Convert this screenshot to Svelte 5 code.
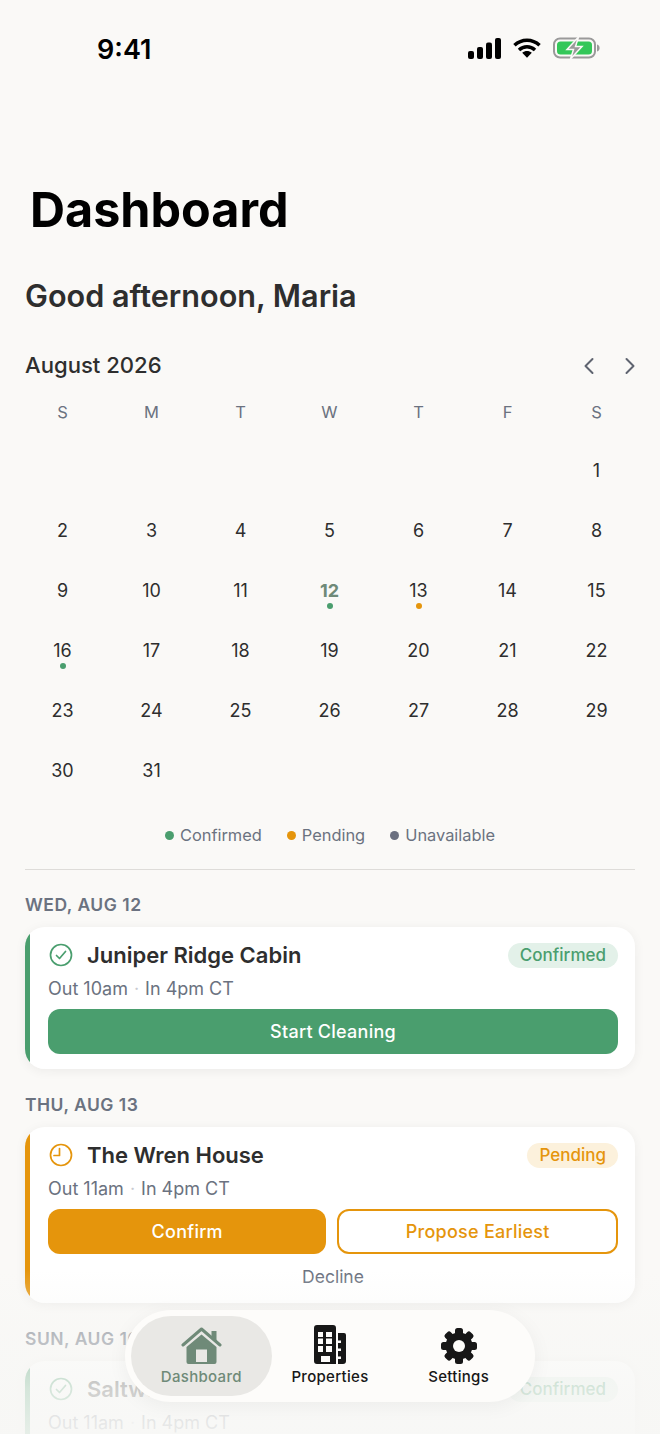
<script lang="ts">
  const weekdays = ["S", "M", "T", "W", "T", "F", "S"];
  const blanks = Array(6).fill(0);
  const days = Array.from({ length: 31 }, (_, i) => i + 1);

  const dots: Record<number, string> = { 12: "green", 13: "amber", 16: "green" };
  const legend = [
    { label: "Confirmed", color: "green" },
    { label: "Pending", color: "amber" },
    { label: "Unavailable", color: "slate" }
  ];
  const gearTeeth = [0, 45, 90, 135];
</script>

<div class="page">
  <header class="status">
    <span class="time">9:41</span>
    <div class="status-icons">
      <svg width="33" height="21" viewBox="0 0 33 21" fill="#000">
        <rect x="0" y="13" width="6" height="8" rx="2" />
        <rect x="9" y="9" width="6" height="12" rx="2" />
        <rect x="18" y="4.500" width="6" height="16.500" rx="2" />
        <rect x="27" y="0" width="6" height="21" rx="2" />
      </svg>
      <svg width="28" height="20" viewBox="0 0 29 20" fill="none" stroke="#000" stroke-width="3.600">
        <path d="M1.500 7.200C9 .2 20 .2 27.500 7.200" />
        <path d="M6.200 12C11 7.600 18 7.600 22.800 12" />
        <path d="M14.500 20l-5-5c3-2.400 7-2.400 10 0z" fill="#000" stroke="none" />
      </svg>
      <svg width="47" height="22" viewBox="0 0 47 22">
        <rect x="1" y="1.500" width="41" height="19" rx="6" fill="none" stroke="#9a9a9a" stroke-width="2" />
        <rect x="4" y="4.500" width="35" height="13" rx="3.500" fill="#34c759" />
        <path d="M44 7.500c2 .6 2.600 2 2.600 3.500s-.6 2.900-2.600 3.500z" fill="#9a9a9a" />
        <path d="M25.500 0 14 12.500h6.500L17.500 22 29 9.500h-6.500z" fill="#9a9a9a" stroke="#faf9f7" stroke-width="1.500" />
      </svg>
    </div>
  </header>

  <h1>Dashboard</h1>
  <h2>Good afternoon, Maria</h2>

  <section class="calendar">
    <div class="month-row">
      <span class="month">August 2026</span>
      <div class="arrows">
        <svg width="12" height="18" viewBox="0 0 12 18" fill="none" stroke="#5f6470" stroke-width="2" stroke-linecap="round" stroke-linejoin="round"><path d="M9.500 2 2.500 9l7 7" /></svg>
        <svg width="12" height="18" viewBox="0 0 12 18" fill="none" stroke="#5f6470" stroke-width="2" stroke-linecap="round" stroke-linejoin="round"><path d="M2.500 2l7 7-7 7" /></svg>
      </div>
    </div>

    <div class="weekdays">
      {#each weekdays as d}
        <span>{d}</span>
      {/each}
    </div>

    <div class="grid">
      {#each blanks as _}
        <span class="cell"></span>
      {/each}
      {#each days as day}
        <span class="cell" class:today={day === 12}>
          {day}
          {#if dots[day]}
            <i class="dot {dots[day]}"></i>
          {/if}
        </span>
      {/each}
    </div>

    <div class="legend">
      {#each legend as item}
        <span class="legend-item"><i class="legend-dot {item.color}"></i>{item.label}</span>
      {/each}
    </div>
  </section>

  <div class="divider"></div>

  <p class="date">WED, AUG 12</p>
  <article class="card card-green">
    <div class="card-top">
      <svg class="status-icon" width="24" height="24" viewBox="0 0 24 24" fill="none" stroke="#4a9e6e" stroke-width="1.700" stroke-linecap="round" stroke-linejoin="round">
        <circle cx="12" cy="12" r="10.500" /><path d="m7.500 12.500 3 3 6-7" />
      </svg>
      <span class="name">Juniper Ridge Cabin</span>
      <span class="badge badge-green">Confirmed</span>
    </div>
    <p class="times">Out 10am<b>·</b>In 4pm CT</p>
    <button class="btn btn-green">Start Cleaning</button>
  </article>

  <p class="date">THU, AUG 13</p>
  <article class="card card-amber">
    <div class="card-top">
      <svg class="status-icon" width="24" height="24" viewBox="0 0 24 24" fill="none" stroke="#e5950c" stroke-width="1.700" stroke-linecap="round" stroke-linejoin="round">
        <circle cx="12" cy="12" r="10.500" /><path d="M10.500 5.500v7H5" />
      </svg>
      <span class="name">The Wren House</span>
      <span class="badge badge-amber">Pending</span>
    </div>
    <p class="times">Out 11am<b>·</b>In 4pm CT</p>
    <div class="actions">
      <button class="btn btn-amber">Confirm</button>
      <button class="btn btn-outline">Propose Earliest</button>
    </div>
    <p class="decline">Decline</p>
  </article>

  <p class="date">SUN, AUG 16</p>
  <article class="card card-green">
    <div class="card-top">
      <svg class="status-icon" width="24" height="24" viewBox="0 0 24 24" fill="none" stroke="#4a9e6e" stroke-width="1.700" stroke-linecap="round" stroke-linejoin="round">
        <circle cx="12" cy="12" r="10.500" /><path d="m7.500 12.500 3 3 6-7" />
      </svg>
      <span class="name">Saltwater Cottage</span>
      <span class="badge badge-green">Confirmed</span>
    </div>
    <p class="times">Out 11am<b>·</b>In 4pm CT</p>
  </article>

  <div class="fade"></div>

  <nav class="tabbar">
    <div class="tab active">
      <svg width="41" height="37" viewBox="0 0 41 37" fill="currentColor">
        <path d="M20.500 7.500 35.500 20v15a2 2 0 0 1-2 2h-26a2 2 0 0 1-2-2V20zM15 22.500V35h11V22.500z" fill-rule="evenodd" />
        <path d="M2 18 20.500 2 39 18" fill="none" stroke="currentColor" stroke-width="3" stroke-linecap="round" stroke-linejoin="round" />
        <path d="M30.500 4h5v11l-5-4.500z" />
      </svg>
      <span>Dashboard</span>
    </div>
    <div class="tab">
      <svg width="34" height="39" viewBox="0 0 34 39" fill="#171717">
        <path fill-rule="evenodd" d="M4 0h16a3 3 0 0 1 3 3v36H4a3 3 0 0 1-3-3V3a3 3 0 0 1 3-3zM5 7v5h5V7zm8 0v5h6V7zM5 13.500V19h5v-5.500zm8 0V19h6v-5.500zM5 21v6h5v-6zm8 0v6h6v-6zM8 31v6h9v-6z" />
        <path d="M25 8h6a2 2 0 0 1 2 2v26a3 3 0 0 1-3 3h-5v-5h3v-2.500h-3V26h3v-2.500h-3V18h3v-2.500h-3z" />
      </svg>
      <span>Properties</span>
    </div>
    <div class="tab">
      <svg width="36" height="36" viewBox="0 0 36 36">
        <circle cx="18" cy="18" r="13.500" fill="#171717" />
        {#each gearTeeth as angle}
          <rect x="14" y="0" width="8" height="36" rx="2.500" fill="#171717" transform="rotate({angle} 18 18)" />
        {/each}
        <circle cx="18" cy="18" r="6" fill="#fdfcfa" />
      </svg>
      <span>Settings</span>
    </div>
  </nav>
</div>

<style>
  :global(body) {
    margin: 0;
    background: #faf9f7;
  }

  .page {
    position: relative;
    width: 660px;
    height: 1434px;
    overflow: hidden;
    padding: 0 25px;
    box-sizing: border-box;
    background: #faf9f7;
    font-family: Inter, "Liberation Sans", sans-serif;
    color: #2e2e2e;
  }

  .status {
    display: flex;
    justify-content: space-between;
    align-items: center;
    height: 96px;
    padding: 0 35px 0 72px;
  }

  .time {
    padding-top: 3px;
    font-size: 27px;
    font-weight: 600;
    color: #000;
  }

  .status-icons {
    display: flex;
    align-items: center;
    gap: 12px;
  }

  h1 {
    margin: 0;
    padding: 84px 0 0 5px;
    font-size: 48.500px;
    line-height: 59px;
    font-weight: 700;
    color: #000;
  }

  h2 {
    margin: 37px 0 0;
    font-size: 30.600px;
    line-height: 40px;
    font-weight: 600;
  }

  .calendar {
    margin-top: 34px;
  }

  .month-row {
    display: flex;
    justify-content: space-between;
    align-items: center;
    height: 30px;
  }

  .month {
    margin-bottom: 1px;
    font-size: 22.100px;
    font-weight: 550;
  }

  .arrows {
    display: flex;
    gap: 29px;
    padding-top: 2px;
    margin-right: -1px;
  }

  .weekdays,
  .grid {
    display: grid;
    grid-template-columns: repeat(7, 89px);
    margin-left: -7px;
    text-align: center;
  }

  .weekdays {
    margin-top: 22px;
    font-size: 16.500px;
    line-height: 20px;
    color: #6b7280;
  }

  .grid {
    margin-top: 19px;
    grid-auto-rows: 60px;
    font-size: 18px;
  }

  .cell {
    position: relative;
    display: block;
    line-height: 60px;
  }

  .today {
    font-weight: 700;
    color: #6f8a78;
  }

  .dot {
    position: absolute;
    left: 50%;
    top: 42px;
    width: 6px;
    height: 6px;
    margin-left: -3px;
    border-radius: 50%;
  }

  .green {
    background: #4a9e6e;
  }

  .amber {
    background: #e5950c;
  }

  .slate {
    background: #6b7080;
  }

  .legend {
    display: flex;
    justify-content: center;
    gap: 25px;
    margin-top: 23px;
    font-size: 16.400px;
    line-height: 22px;
    color: #6b7280;
  }

  .legend-item {
    display: flex;
    align-items: center;
    gap: 6px;
  }

  .legend-dot {
    width: 9px;
    height: 9px;
    border-radius: 50%;
  }

  .divider {
    height: 1px;
    margin-top: 23px;
    background: #dedcd9;
  }

  .date {
    margin: 25px 0 11px;
    font-size: 17.500px;
    line-height: 22px;
    font-weight: 600;
    letter-spacing: 0.5px;
    color: #6b7280;
  }

  .divider + .date {
    margin-top: 24px;
  }

  .card {
    border-radius: 20px;
    padding: 14px 17px 15px 23px;
    box-shadow: 0 2px 12px rgba(0, 0, 0, 0.06);
    box-sizing: border-box;
  }

  .card-green {
    background: linear-gradient(to right, #4a9e6e 5px, #fff 5px);
  }

  .card-amber {
    background: linear-gradient(to right, #e5950c 5px, #fff 5px);
  }

  .card-top {
    display: flex;
    align-items: center;
    height: 28px;
  }

  .status-icon {
    margin: 0 14px 0 1px;
  }

  .name {
    flex: 1;
    font-size: 22px;
    font-weight: 600;
  }

  .badge {
    padding: 0 12px;
    border-radius: 13px;
    font-size: 17px;
    line-height: 25px;
    font-weight: 550;
  }

  .badge-green {
    color: #4a9e6e;
    background: #e3f1e9;
  }

  .badge-amber {
    color: #e5950c;
    background: #fcf1dc;
  }

  .times {
    margin: 8px 0;
    font-size: 18px;
    line-height: 24px;
    color: #6b7280;
  }

  .times b {
    margin: 0 6px;
    font-weight: 400;
    color: #c8cad0;
  }

  .btn {
    display: block;
    width: 100%;
    height: 45px;
    border: 0;
    border-radius: 12px;
    font-family: inherit;
    font-size: 18px;
    font-weight: 550;
    letter-spacing: 0.25px;
    color: #fff;
  }

  .btn-green {
    background: #4a9e6e;
  }

  .btn-amber {
    background: #e5950c;
  }

  .btn-outline {
    background: #fff;
    border: 2px solid #e5950c;
    color: #e5950c;
  }

  .actions {
    display: flex;
    gap: 11px;
  }

  .decline {
    margin: 12px 0 0;
    font-size: 17.500px;
    line-height: 22px;
    text-align: center;
    color: #6b7280;
  }

  .fade {
    position: absolute;
    left: 0;
    right: 0;
    bottom: 0;
    height: 164px;
    background: linear-gradient(
      rgba(247, 247, 245, 0),
      rgba(247, 247, 245, 0.56) 41%,
      rgba(247, 247, 245, 0.8) 72%,
      rgba(247, 247, 245, 0.9)
    );
  }

  .tabbar {
    position: absolute;
    left: 125px;
    top: 1310px;
    width: 410px;
    height: 92px;
    display: grid;
    grid-template-columns: repeat(3, 1fr);
    padding: 6px 12px;
    box-sizing: border-box;
    border-radius: 46px;
    background: #fdfcfa;
    box-shadow: 0 4px 20px rgba(0, 0, 0, 0.05);
  }

  .tab {
    display: flex;
    flex-direction: column;
    align-items: center;
    justify-content: flex-end;
    gap: 4px;
    padding-bottom: 10px;
    box-sizing: border-box;
    border-radius: 40px;
    font-size: 15px;
    line-height: 18px;
    font-weight: 500;
    letter-spacing: 0.3px;
    color: #171717;
  }

  .tab.active {
    margin: 0 -6px;
    background: #e9e8e5;
    color: #6f8a78;
  }
</style>
